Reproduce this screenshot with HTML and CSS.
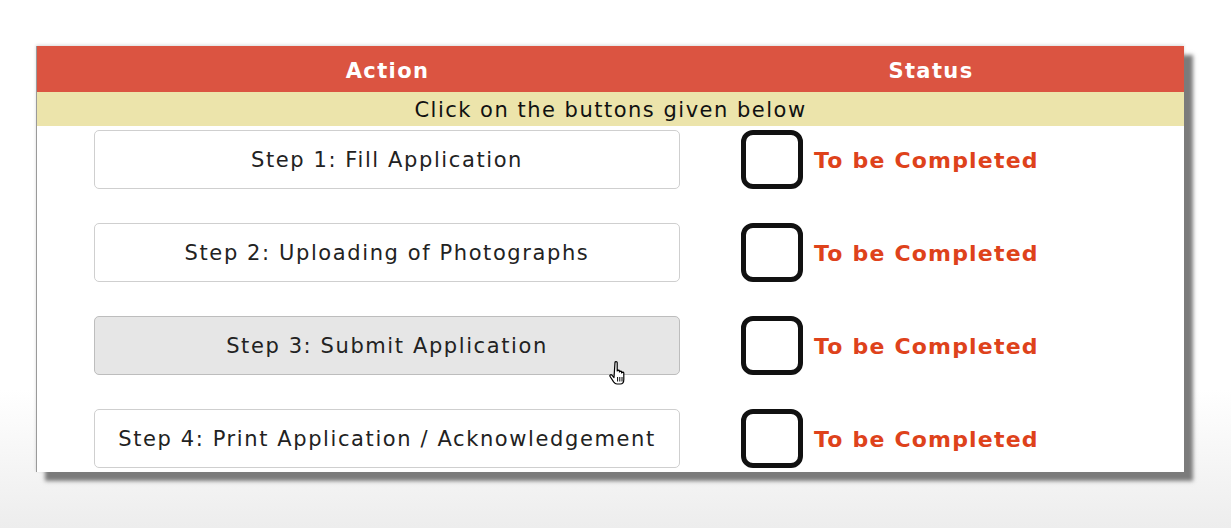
FILE: index.html
```html
<!DOCTYPE html>
<html lang="en">
<head>
    <meta charset="UTF-8">
    <title>Application Steps</title>
    <link rel="stylesheet" href="styles.css">
</head>
<body>
    <div class="panel">
        <div class="head">
            <div class="head-cell">Action</div>
            <div class="head-cell">Status</div>
        </div>
        <div class="note">Click on the buttons given below</div>

        <div class="steps">
            <div class="step">
                <div class="action"><button class="step-btn">Step 1: Fill Application</button></div>
                <div class="status"><span class="box"></span><span class="label">To be Completed</span></div>
            </div>
            <div class="step">
                <div class="action"><button class="step-btn">Step 2: Uploading of Photographs</button></div>
                <div class="status"><span class="box"></span><span class="label">To be Completed</span></div>
            </div>
            <div class="step">
                <div class="action">
                    <button class="step-btn hover">Step 3: Submit Application</button>
                    <!-- mouse pointer over the button -->
                    <svg class="pointer" width="22" height="26" viewBox="0 0 22 26">
                        <path d="M6 2.5c0-1.2 2.2-1.2 2.2 0v8.5c0-1.1 2.2-1.1 2.2 0v1c0-1.1 2.2-1.1 2.2 0v1c0-1.1 2.2-1.1 2.2 0v6.5c0 2.5-1.4 4.5-3.5 4.5h-3.3c-1.6 0-2.4-0.8-3.4-2.2l-3.5-5.3c-0.8-1.2 0.8-2.4 1.8-1.3l2.1 2.3z" fill="#fff" stroke="#000" stroke-width="1.2" stroke-linejoin="round"/>
                        <path d="M8.6 17v4.5M10.8 17v4.5M13 17v4.5" stroke="#000" stroke-width="1"/>
                    </svg>
                </div>
                <div class="status"><span class="box"></span><span class="label">To be Completed</span></div>
            </div>
            <div class="step">
                <div class="action"><button class="step-btn">Step 4: Print Application / Acknowledgement</button></div>
                <div class="status"><span class="box"></span><span class="label">To be Completed</span></div>
            </div>
        </div>
    </div>
</body>
</html>
```

FILE: styles.css
```css
body {
    margin: 0;
    padding: 0;
    height: 528px;
    font-family: 'DejaVu Sans', Verdana, sans-serif;
    background: linear-gradient(to bottom, #ffffff 0px, #ffffff 390px, #ededed 528px);
    overflow: hidden;
}

.panel {
    width: 1148px;
    margin: 46px 0 0 36px;
    background-color: #fff;
    border-left: 1px solid #9a9a9a;
    box-sizing: border-box;
    box-shadow: 9px 9px 4px #7b7b7b, 0 -1px 3px rgba(0, 0, 0, 0.15);
}

.head {
    display: grid;
    grid-template-columns: 701px 386px 1fr;
    height: 46px;
    padding-top: 3px;
    box-sizing: border-box;
    align-items: center;
    background-color: #db5441;
    color: #fff;
    font-size: 21px;
    font-weight: bold;
    letter-spacing: 1.4px;
}

.head-cell {
    text-align: center;
}

.note {
    height: 34px;
    line-height: 36px;
    background-color: #ece4ab;
    text-align: center;
    font-size: 21px;
    letter-spacing: 1.5px;
    color: #111;
}

.steps {
    display: grid;
    gap: 34px;
    padding: 4px 0 4px;
}

.step {
    display: grid;
    grid-template-columns: 701px 1fr;
    align-items: center;
}

.action {
    position: relative;
    display: flex;
    justify-content: center;
}

.step-btn {
    width: 586px;
    height: 59px;
    margin-left: -1px;
    padding-top: 2px;
    background-color: #fff;
    border: 1px solid #cfcfcf;
    border-radius: 5px;
    font-family: inherit;
    font-size: 21px;
    letter-spacing: 1.6px;
    color: #222;
    cursor: pointer;
}

.step-btn.hover {
    background-color: #e6e6e6;
    border-color: #bdbdbd;
}

.pointer {
    position: absolute;
    left: 572px;
    top: 44px;
}

.status {
    display: flex;
    align-items: center;
    gap: 11px;
    padding-left: 3px;
}

.box {
    width: 52px;
    height: 49px;
    border: 5px solid #111;
    border-radius: 12px;
    box-sizing: content-box;
}

.label {
    color: #de421b;
    font-size: 22px;
    font-weight: bold;
    letter-spacing: 1.2px;
    padding-top: 2px;
}
```
